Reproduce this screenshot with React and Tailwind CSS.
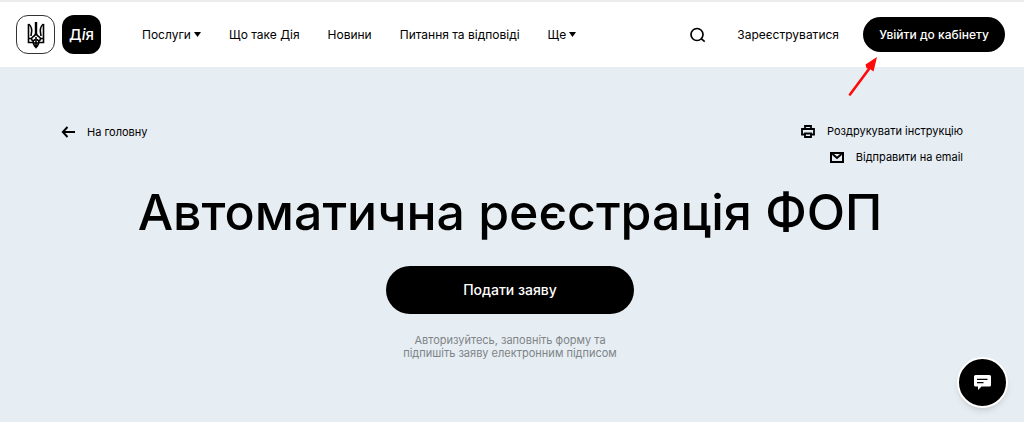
import React from 'react';

const navItems = [
  { label: 'Послуги', hasMenu: true },
  { label: 'Що таке Дія' },
  { label: 'Новини' },
  { label: 'Питання та відповіді' },
  { label: 'Ще', hasMenu: true }
];

const Trident = () => (
  <svg viewBox="0 0 18 28" className="h-7 w-[18px]" fill="none" stroke="#000" strokeWidth="1.600">
    <path d="M1.500 3v18.500H6M16.500 3v18.500H12" />
    <path d="M1.500 3C4 5 4.800 7.500 4.700 10l-.7 5M16.500 3C14 5 13.200 7.500 13.300 10l.7 5" />
    <path d="M9 1v13" strokeWidth="2.400" />
    <path d="M8.500 13C8 16 4.500 15 4.500 18c0 2 3.500 2 3.500 0M9.500 13c.5 3 4 2 4 5 0 2-3.500 2-3.500 0" />
    <path d="M1.500 17.500h3M13.500 17.500h3M6 19.500c0 3 1 5 3 7 2-2 3-4 3-7M9 16v10.500M6 22h6" />
  </svg>
);

const Caret = () => (
  <svg viewBox="0 0 7 5" className="h-[5px] w-[7px]">
    <path d="M0 0h7L3.500 5z" fill="currentColor" />
  </svg>
);

const SearchIcon = () => (
  <svg viewBox="0 0 16 16" className="size-4" fill="none" stroke="currentColor" strokeWidth="1.700">
    <circle cx="7" cy="7.500" r="6" />
    <path d="M11.200 11.700l3.500 3" />
  </svg>
);

const BackIcon = () => (
  <svg viewBox="0 0 14 12" className="h-3 w-3.5" fill="none" stroke="currentColor" strokeWidth="1.900">
    <path d="M14 6H2M6.500 1L1.800 6l4.700 5" />
  </svg>
);

const PrintIcon = () => (
  <svg viewBox="0 0 14 13" className="h-[13px] w-3.5" fill="none" stroke="currentColor" strokeWidth="1.800">
    <path d="M4 3.500V1h6v2.500M3.500 9.500H1V4h12v5.500h-2.500" />
    <path d="M4 8.500h6V12H4z" />
  </svg>
);

const MailIcon = () => (
  <svg viewBox="0 0 14 11" className="h-[11px] w-3.5" fill="none" stroke="currentColor" strokeWidth="2">
    <path d="M1 1h12v9H1z" />
    <path d="M2.500 2L7 6l4.500-4" />
  </svg>
);

const ChatIcon = () => (
  <svg viewBox="0 0 17 15" className="h-[15px] w-[17px]">
    <path d="M1.500 0h14q1.500 0 1.500 1.500v8.500q0 1.500-1.500 1.500H7.500L4 15v-3.500H1.500Q0 11.500 0 10V1.500Q0 0 1.500 0z" fill="#fff" />
    <path d="M3 4.300h10.500M3 7.700h6.500" stroke="#000" strokeWidth="1.300" />
  </svg>
);

// Красная стрелка, указывающая на кнопку входа
const Pointer = () => (
  <svg viewBox="0 0 30 40" className="pointer-events-none absolute top-full left-[-15px] mt-1 h-10 w-[30px]">
    <path d="M2 38.500L21 13" stroke="#ff0a0a" strokeWidth="2.600" strokeLinecap="round" />
    <path d="M29 1L25.500 15.500l-3.500-2.500-3.500-.8-1-3.700z" fill="#ff0a0a" />
  </svg>
);

const Header = () => (
  <header className="flex h-[67px] items-center border-t-2 border-[#ececec] bg-white pr-[19px] pl-4">
    <a href="#" aria-label="Дія" className="flex shrink-0 gap-[7px]">
      <span className="flex size-[39px] items-center justify-center rounded-xl border border-[#333] bg-white">
        <Trident />
      </span>
      <span className="flex size-[39px] items-center justify-center rounded-xl bg-black text-[15px] font-medium text-white">
        <span>Д<i>і</i>я</span>
      </span>
    </a>
    <nav className="ml-[41px] flex items-center gap-7 whitespace-nowrap">
      {navItems.map((item) => (
        <a key={item.label} href="#" className="flex items-center gap-[3px]">
          {item.label}
          {item.hasMenu && <Caret />}
        </a>
      ))}
    </nav>
    <div className="ml-auto flex items-center whitespace-nowrap">
      <button aria-label="Пошук" className="mr-[31px]">
        <SearchIcon />
      </button>
      <a href="#" className="mr-6">Зареєструватися</a>
      <div className="relative">
        <button className="h-[35px] w-[142px] rounded-full bg-black font-medium text-white">
          Увійти до кабінету
        </button>
        <Pointer />
      </div>
    </div>
  </header>
);

const App = () => {
  return (
    <div className="flex min-h-screen flex-col bg-[#e6edf3] font-['Inter',sans-serif] text-[12px] leading-4 text-black">
      <Header />
      <main className="px-[61px] pt-14 pb-14">
        <div className="flex items-start justify-between">
          <a href="#" className="mt-px flex items-center gap-3 text-[11px]">
            <BackIcon />
            На головну
          </a>
          <div className="flex flex-col items-end gap-2.5 text-[11px]">
            <button className="flex items-center gap-3">
              <PrintIcon />
              Роздрукувати інструкцію
            </button>
            <button className="flex items-center gap-3">
              <MailIcon />
              Відправити на email
            </button>
          </div>
        </div>
        <div className="mt-5 flex flex-col items-center pr-1 text-center">
          <h1 className="text-[50px] leading-[54px] font-medium">Автоматична реєстрація ФОП</h1>
          <button className="mt-[27px] h-12 w-[248px] rounded-full bg-black text-sm font-medium text-white">
            Подати заяву
          </button>
          <p className="mt-5 w-[230px] text-[11px] leading-[13px] text-[#7f8488]">
            Авторизуйтесь, заповніть форму та підпишіть заяву електронним підписом
          </p>
        </div>
      </main>
      <button
        aria-label="Чат"
        className="fixed right-4 bottom-3.5 flex size-[51px] items-center justify-center rounded-full border-2 border-white bg-black shadow-md"
      >
        <ChatIcon />
      </button>
    </div>
  );
};

export default App;
